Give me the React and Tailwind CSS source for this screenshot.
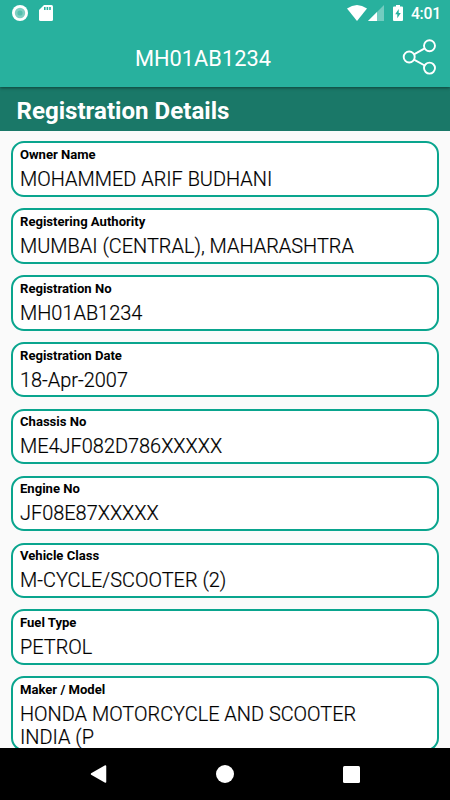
const details = [
  { label: "Owner Name", value: "MOHAMMED ARIF BUDHANI" },
  { label: "Registering Authority", value: "MUMBAI (CENTRAL), MAHARASHTRA" },
  { label: "Registration No", value: "MH01AB1234" },
  { label: "Registration Date", value: "18-Apr-2007" },
  { label: "Chassis No", value: "ME4JF082D786XXXXX" },
  { label: "Engine No", value: "JF08E87XXXXX" },
  { label: "Vehicle Class", value: "M-CYCLE/SCOOTER (2)" },
  { label: "Fuel Type", value: "PETROL" },
  { label: "Maker / Model", value: "HONDA MOTORCYCLE AND SCOOTER INDIA (P" },
];

function StatusBar() {
  return (
    <div className="flex h-[27px] items-start justify-between pl-3 pr-[9px] pt-[5px] text-white">
      <div className="flex gap-[11px]">
        <svg width="16" height="16" viewBox="0 0 16 16">
          <circle cx="8" cy="8" r="8" fill="#fff" />
          <circle cx="8" cy="8" r="5.2" fill="#7fcfc2" />
          <circle cx="8" cy="8" r="2.6" fill="#55bfae" />
        </svg>
        <svg width="14" height="16" viewBox="0 0 14 16">
          <path d="M5 0h7.500Q14 0 14 1.500v13q0 1.500-1.500 1.500h-11Q0 16 0 14.500V5Z" fill="#fff" />
          <path d="M5 2h1.600v3H5zM7.600 2h1.600v3H7.600zM10.200 2h1.600v3h-1.600z" fill="#28b19e" />
        </svg>
      </div>
      <div className="flex">
        <svg width="20" height="16" viewBox="0 0 20 16">
          <path d="M0 3.500Q10-3.500 20 3.500L10 16Z" fill="#fff" />
        </svg>
        <svg className="ml-[1px]" width="16" height="16" viewBox="0 0 16 16">
          <path d="M0 16 16 0v16Z" fill="#fff" fillOpacity=".35" />
          <path d="M0 16 9 7v9Z" fill="#fff" />
        </svg>
        <svg className="ml-[9px]" width="10" height="16" viewBox="0 0 10 16">
          <path d="M3 0h4v1.500h2q1 0 1 1V15q0 1-1 1H1q-1 0-1-1V2.500q0-1 1-1h2Z" fill="#fff" />
          <path d="M5.700 4 2.200 9.300h2.100V13.300L7.800 8H5.700Z" fill="#28b19e" />
        </svg>
        <span className="ml-2 pt-[0.500px] text-[15.700px] leading-4 font-medium tracking-[-0.2px]">4:01</span>
      </div>
    </div>
  );
}

function ShareIcon() {
  return (
    <svg width="36" height="38" viewBox="0 0 36 38" fill="none" stroke="#fff" strokeWidth="1.9">
      <circle cx="7.200" cy="19" r="5.500" />
      <circle cx="27.500" cy="7.700" r="5.500" />
      <circle cx="27.500" cy="30.100" r="5.500" />
      <path d="m12 16.300 10.700-5.900M12 21.700l10.700 5.800" />
    </svg>
  );
}

function Header() {
  return (
    <header className="relative z-10 h-[87.400px] shrink-0 bg-[#28b19e] shadow-[0_1px_3px_rgba(0,0,0,0.45)]">
      <StatusBar />
      <div className="flex h-[60px] items-center justify-between pr-[12px]">
        <h1 className="pl-[135px] pt-[3px] text-[21.800px] leading-6 text-white">MH01AB1234</h1>
        <button className="flex" aria-label="Share">
          <ShareIcon />
        </button>
      </div>
    </header>
  );
}

function DetailCard({ label, value }) {
  return (
    <div className="min-h-[55.500px] shrink-0 rounded-[13px] border-2 border-[#0aa58e] bg-white pl-[7px] pr-14 pt-[3.600px] text-black">
      <div className="text-[13.100px] leading-[15px] font-bold tracking-[-0.01px]">{label}</div>
      <div className="mt-[6px] text-[19.930px] leading-[23px] font-light [-webkit-text-stroke:0.2px_black]">{value}</div>
    </div>
  );
}

function NavBar() {
  return (
    <nav className="flex h-[52px] shrink-0 items-center justify-between bg-black pl-[89px] pr-[90px]">
      <svg width="18" height="18" viewBox="0 0 18 18">
        <path d="M16.500 1v16L2.500 9Z" fill="#fff" stroke="#fff" strokeWidth="1.500" strokeLinejoin="round" />
      </svg>
      <div className="size-[18px] rounded-full bg-white" />
      <div className="size-[17px] rounded-[1.500px] bg-white" />
    </nav>
  );
}

export default function App() {
  return (
    <div className="flex h-[800px] w-[450px] flex-col overflow-hidden bg-[#fafafa] font-['Roboto',sans-serif]">
      <Header />
      <h2 className="h-[43.600px] shrink-0 bg-[#1a7868] pl-[16.500px] pt-[8.500px] text-[24.100px] leading-[30px] font-bold text-white">
        Registration Details
      </h2>
      <main className="flex min-h-0 flex-1 flex-col gap-[11.375px] overflow-hidden px-[11px] pt-[10.300px]">
        {details.map((item) => (
          <DetailCard key={item.label} {...item} />
        ))}
      </main>
      <NavBar />
    </div>
  );
}
